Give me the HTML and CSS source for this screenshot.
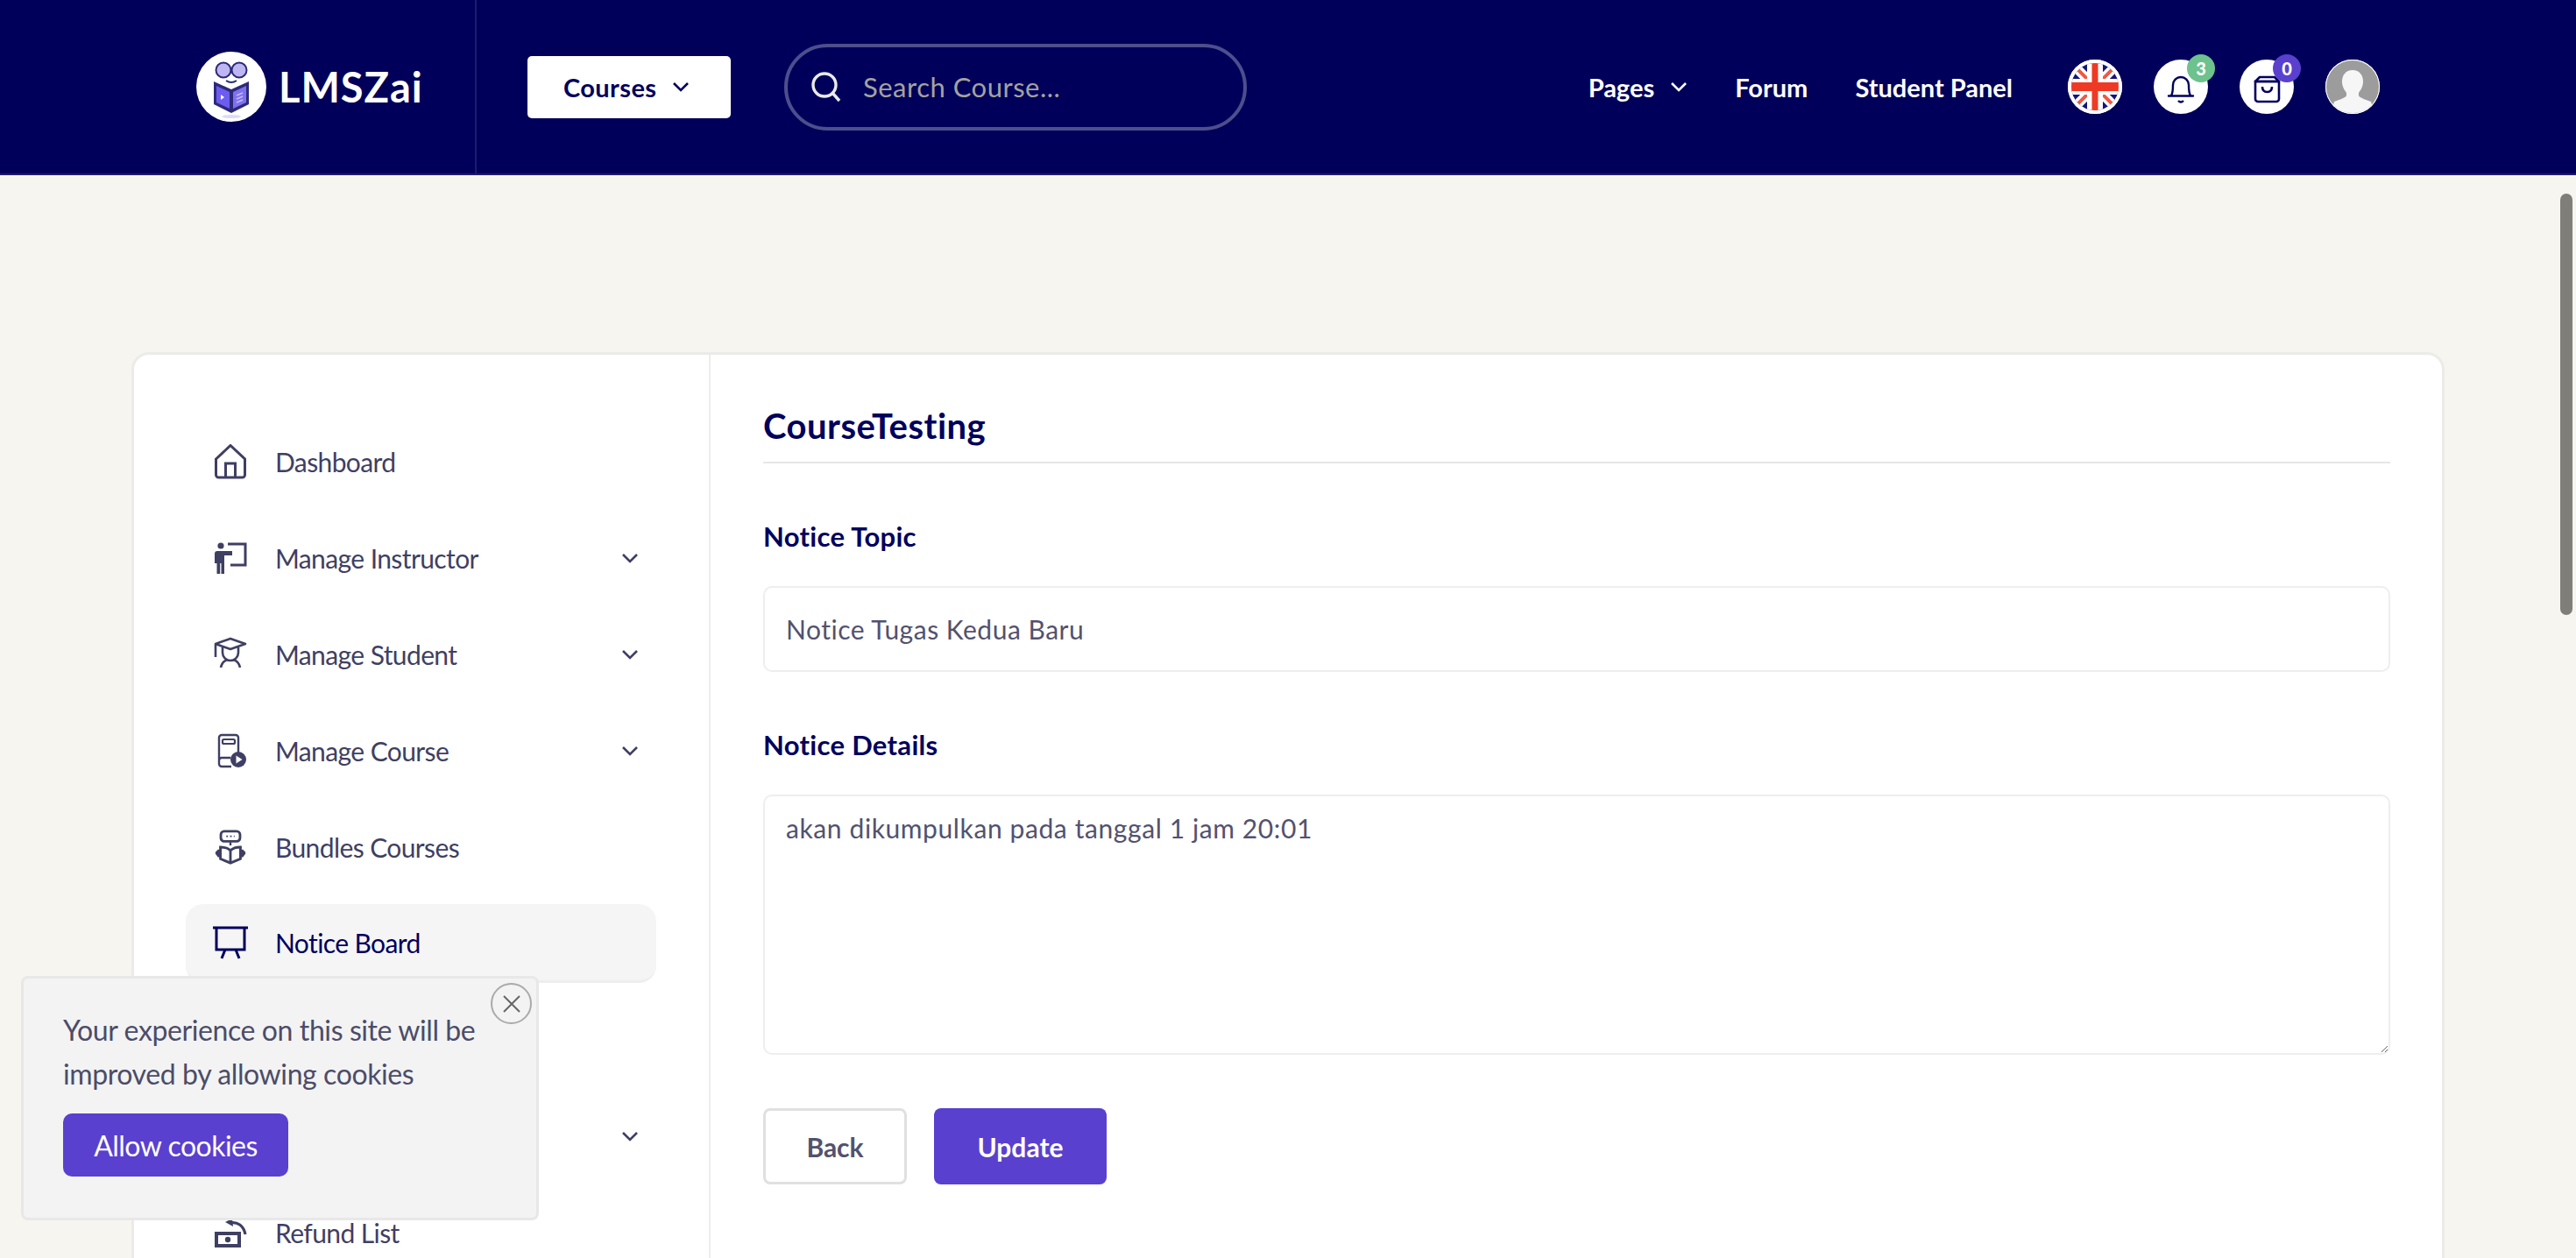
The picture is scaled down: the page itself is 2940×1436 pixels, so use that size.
FILE: index.html
```html
<!DOCTYPE html>
<html lang="en">
<head>
    <meta charset="UTF-8">
    <title>LMSZai - Notice Board</title>
    <link rel="stylesheet" href="styles.css">
</head>
<body>
    <header class="topbar">
        <a class="brand">
            <span class="brand-mark">
                <svg viewBox="0 0 80 80" width="80" height="80">
                    <circle cx="40" cy="40" r="40" fill="#fff"/>
                    <circle cx="31" cy="21" r="8.500" fill="#bdb6f2" stroke="#2c2a78" stroke-width="2"/>
                    <circle cx="49" cy="21" r="8.500" fill="#bdb6f2" stroke="#2c2a78" stroke-width="2"/>
                    <path d="M34 33q6 4 12 0" fill="none" stroke="#2c2a78" stroke-width="2"/>
                    <path d="M20 34l20 9 20-9v26L40 70 20 60z" fill="#2c2a78"/>
                    <path d="M23 39l15 7v19l-15-7z" fill="#6d5cf0"/>
                    <path d="M57 39l-15 7v19l15-7z" fill="#7f70f0"/>
                    <path d="M28 49l4 3-4 3z" fill="#fff"/>
                    <path d="M46 50l7-3M46 54l7-3M46 58l7-3" stroke="#c4bdf7" stroke-width="1.500"/>
                    <ellipse cx="40" cy="74" rx="11" ry="2" fill="#dedbf7"/>
                </svg>
            </span>
            <span class="brand-name">LMSZai</span>
        </a>
        <button class="courses-btn">Courses
            <svg class="chev" viewBox="0 0 20 12" width="20" height="12"><path d="M2 2l8 8 8-8"/></svg>
        </button>
        <div class="search">
            <svg viewBox="0 0 36 36" width="36" height="36"><circle cx="16" cy="16" r="13"/><path d="M25 25l8 9"/></svg>
            <span class="search-text">Search Course...</span>
        </div>
        <nav class="topnav">
            <a class="topnav-link">Pages
                <svg class="chev" viewBox="0 0 20 12" width="20" height="12"><path d="M2 2l8 8 8-8"/></svg>
            </a>
            <a class="topnav-link">Forum</a>
            <a class="topnav-link">Student Panel</a>
        </nav>
        <div class="top-icons">
            <span class="round-icon">
                <svg viewBox="0 0 62 62" width="62" height="62">
                    <defs><clipPath id="flagClip"><circle cx="31" cy="31" r="27"/></clipPath></defs>
                    <circle cx="31" cy="31" r="31" fill="#fff"/>
                    <g clip-path="url(#flagClip)">
                        <rect width="62" height="62" fill="#14147a"/>
                        <path d="M4 4l54 54M58 4L4 58" stroke="#fff" stroke-width="11"/>
                        <path d="M4 4l54 54M58 4L4 58" stroke="#ee5a44" stroke-width="4"/>
                        <path d="M31 0v62M0 31h62" stroke="#fff" stroke-width="18"/>
                        <path d="M31 0v62" stroke="#ee3a24" stroke-width="7"/>
                        <path d="M0 31h62" stroke="#ee3a24" stroke-width="10"/>
                    </g>
                </svg>
            </span>
            <span class="round-icon">
                <svg viewBox="0 0 62 62" width="62" height="62">
                    <path d="M20 41c2-3 2-6 2-12a9 9 0 0 1 18 0c0 6 0 9 2 12M17 41.500h28" fill="none" stroke="#01005c" stroke-width="2.400" stroke-linecap="round"/>
                    <path d="M28 47q3 3 6 0" fill="none" stroke="#01005c" stroke-width="2.400"/>
                </svg>
                <span class="badge badge-green">3</span>
            </span>
            <span class="round-icon">
                <svg viewBox="0 0 62 62" width="62" height="62">
                    <path d="M18 25h27v20a3 3 0 0 1-3 3H21a3 3 0 0 1-3-3z" fill="none" stroke="#01005c" stroke-width="2.600"/>
                    <path d="M23 20h17l5 5H18z" fill="none" stroke="#01005c" stroke-width="2.600" stroke-linejoin="round"/>
                    <path d="M26 31q0 6 5.500 6t5.500-6" fill="none" stroke="#01005c" stroke-width="2.600"/>
                </svg>
                <span class="badge badge-purple">0</span>
            </span>
            <span class="round-icon">
                <svg viewBox="0 0 62 62" width="62" height="62">
                    <defs><clipPath id="userClip"><circle cx="31" cy="31" r="30"/></clipPath></defs>
                    <circle cx="31" cy="31" r="31" fill="#fff"/>
                    <g clip-path="url(#userClip)">
                        <rect width="62" height="62" fill="#9c9c9c"/>
                        <path d="M31 12c8 0 12 6 12 13 0 6-3 10-5 13v3c0 2 8 5 14 7l4 14H6l4-14c6-2 14-5 14-7v-3c-2-3-5-7-5-13 0-7 4-13 12-13z" fill="#f6f6f6"/>
                    </g>
                </svg>
            </span>
        </div>
    </header>

    <main class="page">
        <div class="panel">
            <aside class="sidebar">
                <a class="side-item">
                    <svg class="side-icon" viewBox="0 0 40 40" stroke-width="3"><path d="M3.500 17L20 1.500 36.500 17v18a3 3 0 0 1-3 3h-27a3 3 0 0 1-3-3zM14.500 38V22h11v16"/></svg>
                    <span>Dashboard</span>
                </a>
                <a class="side-item">
                    <svg class="side-icon" viewBox="0 0 40 40">
                        <path d="M17 4h20v24H20" stroke-width="3"/>
                        <circle class="fill" cx="9" cy="6" r="3.600"/>
                        <path class="fill" d="M2 15a3 3 0 0 1 3-3h17v5h-9v21H9.500V26H8.200v12H4.500V26H2z"/>
                    </svg>
                    <span>Manage Instructor</span>
                    <svg class="chev side-chev" viewBox="0 0 20 12" width="20" height="12"><path d="M2 2l8 8 8-8"/></svg>
                </a>
                <a class="side-item">
                    <svg class="side-icon" viewBox="0 0 40 40" stroke-width="2.600">
                        <path d="M20 2l17 6-17 6-17-6zM3 8v15" stroke-linejoin="round"/>
                        <path d="M11 12v6a9 9 0 0 0 18 0v-6"/>
                        <path d="M9 35c1-5 4-8 8-9M31 35c-1-5-4-8-8-9"/>
                    </svg>
                    <span>Manage Student</span>
                    <svg class="chev side-chev" viewBox="0 0 20 12" width="20" height="12"><path d="M2 2l8 8 8-8"/></svg>
                </a>
                <a class="side-item">
                    <svg class="side-icon" viewBox="0 0 40 40">
                        <path d="M29 22V5a3 3 0 0 0-3-3H10a3 3 0 0 0-3 3v30a3 3 0 0 0 3 3h11M7 31a3 3 0 0 1 3-3h10" stroke-width="2.400"/>
                        <rect x="11" y="7" width="14" height="5" rx="1.500" stroke-width="2.200"/>
                        <circle class="fill" cx="29" cy="30" r="9"/>
                        <path d="M26.500 25.500l7 4.500-7 4.500z" fill="#fff" stroke="none"/>
                    </svg>
                    <span>Manage Course</span>
                    <svg class="chev side-chev" viewBox="0 0 20 12" width="20" height="12"><path d="M2 2l8 8 8-8"/></svg>
                </a>
                <a class="side-item">
                    <svg class="side-icon" viewBox="0 0 40 42">
                        <rect x="8.500" y="2" width="23" height="12" rx="4" stroke-width="3"/>
                        <path d="M15 8h10" stroke-width="2" stroke-dasharray="2 2.500"/>
                        <path d="M20 15v4" stroke-width="2.500"/>
                        <path d="M20 25c-3-3-7-4-12-4v14l12 5 12-5V21c-5 0-9 1-12 4zM20 25v14" stroke-width="3"/>
                        <path class="fill" d="M5 24h3v9H5l-3-4v-2z"/>
                        <path class="fill" d="M35 24h-3v9h3l3-4v-2z"/>
                    </svg>
                    <span>Bundles Courses</span>
                </a>
                <a class="side-item side-item-active">
                    <svg class="side-icon" viewBox="0 0 40 40" stroke-width="3">
                        <path d="M0 3h40M4 3v25h32V3M14 28l-4 10M26 28l4 10"/>
                    </svg>
                    <span>Notice Board</span>
                </a>
                <a class="side-item"></a>
                <a class="side-item">
                    <svg class="chev side-chev" viewBox="0 0 20 12" width="20" height="12"><path d="M2 2l8 8 8-8"/></svg>
                </a>
                <a class="side-item">
                    <svg class="side-icon" viewBox="0 0 40 40">
                        <rect x="4" y="21" width="26" height="14" stroke-width="4"/>
                        <circle class="fill" cx="17" cy="28" r="3.200"/>
                        <path d="M19 9c9-2 16 3 18 13" stroke-width="3.200"/>
                        <path class="fill" d="M14 8l8-4 1 9z"/>
                    </svg>
                    <span>Refund List</span>
                </a>
            </aside>

            <section class="content">
                <h1 class="content-title">CourseTesting</h1>
                <label class="field-label">Notice Topic</label>
                <input class="field-input" type="text" value="Notice Tugas Kedua Baru">
                <label class="field-label">Notice Details</label>
                <textarea class="field-input field-area">akan dikumpulkan pada tanggal 1 jam 20:01</textarea>
                <div class="form-actions">
                    <button class="btn btn-back">Back</button>
                    <button class="btn btn-update">Update</button>
                </div>
            </section>
        </div>
    </main>

    <div class="cookie-box">
        <button class="cookie-close">
            <svg viewBox="0 0 22 22" width="22" height="22"><path d="M2 2l18 18M20 2L2 20"/></svg>
        </button>
        <p class="cookie-text">Your experience on this site will be improved by allowing cookies</p>
        <button class="cookie-btn">Allow cookies</button>
    </div>

    <div class="scroll-thumb"></div>
</body>
</html>
```
FILE: styles.css
```css
* {
    box-sizing: border-box;
}

html, body {
    height: 100%;
}

body {
    margin: 0;
    background: #f6f5f0;
    font-family: 'Lato', sans-serif;
    color: #3f3f63;
    overflow: hidden;
}

button {
    font-family: inherit;
    cursor: pointer;
}

.chev path {
    fill: none;
    stroke: currentColor;
    stroke-width: 2.6;
}

/* Top bar */
.topbar {
    height: 200px;
    padding-right: 224px;
    background: #00005a;
    border-bottom: 2px solid #1e1b70;
    display: flex;
    align-items: center;
    color: #fff;
}

.brand {
    width: 544px;
    height: 198px;
    padding-left: 224px;
    border-right: 2px solid #1c1b6c;
    display: flex;
    align-items: center;
    gap: 14px;
}

.brand-mark {
    display: flex;
}

.brand-name {
    font-size: 47px;
    font-weight: 700;
    letter-spacing: 1px;
}

.courses-btn {
    width: 232px;
    height: 71px;
    margin-left: 58px;
    padding-left: 41px;
    background: #fff;
    border: none;
    border-radius: 5px;
    color: #01005c;
    font-size: 29px;
    font-weight: 700;
    letter-spacing: 0.4px;
    display: flex;
    align-items: center;
    gap: 18px;
}

.search {
    width: 528px;
    height: 99px;
    margin-left: 61px;
    border: 4px solid #4d4e8d;
    border-radius: 50px;
    padding-left: 26px;
    display: flex;
    align-items: center;
    gap: 24px;
}

.search svg {
    fill: none;
    stroke: #eaeaea;
    stroke-width: 3.4;
}

.search-text {
    color: #a3a3a0;
    font-size: 31px;
    letter-spacing: 0.5px;
}

.topnav {
    margin-left: auto;
    display: flex;
    align-items: center;
    gap: 54px;
}

.topnav-link {
    font-size: 29px;
    font-weight: 700;
    display: flex;
    align-items: center;
    gap: 18px;
}

.top-icons {
    margin-left: 63px;
    display: flex;
    gap: 36px;
}

.round-icon {
    position: relative;
    width: 62px;
    height: 62px;
    background: #fff;
    border-radius: 50%;
    display: flex;
}

.badge {
    position: absolute;
    top: -6px;
    right: -8px;
    width: 32px;
    height: 32px;
    border-radius: 50%;
    color: #fff;
    font-size: 20px;
    font-weight: 900;
    display: flex;
    align-items: center;
    justify-content: center;
}

.badge-green {
    background: #6dc28d;
}

.badge-purple {
    background: #5a40ce;
}

/* Panel */
.page {
    padding: 202px 150px 0;
}

.panel {
    width: 2640px;
    background: #fff;
    border: 3px solid #ebebe8;
    border-radius: 20px;
    display: flex;
}

.sidebar {
    width: 658px;
    padding: 77px 60px 0 59px;
    border-right: 2px solid #ededeb;
    display: flex;
    flex-direction: column;
    gap: 20px;
    flex-shrink: 0;
}

.side-item {
    height: 90px;
    padding: 0 20px 0 31px;
    border-radius: 20px;
    font-size: 30px;
    letter-spacing: -0.6px;
    display: flex;
    align-items: center;
    gap: 31px;
}

.side-icon {
    width: 40px;
    height: 40px;
    flex-shrink: 0;
    fill: none;
    stroke: currentColor;
}

.side-icon .fill {
    fill: currentColor;
    stroke: none;
}

.side-chev {
    margin-left: auto;
}

.side-item-active {
    background: #f5f5f5;
    border-bottom: 3px solid #eeeeee;
    color: #01005c;
}

/* Form */
.content {
    flex: 1;
    padding: 56px 59px 100px 60px;
    display: flex;
    flex-direction: column;
    align-items: flex-start;
}

.content-title {
    width: 100%;
    margin: 0 0 63px;
    padding-bottom: 16px;
    border-bottom: 2px solid #e6e6e6;
    color: #01005c;
    font-size: 40px;
    line-height: 50px;
    font-weight: 700;
    letter-spacing: 0.5px;
}

.field-label {
    height: 40px;
    margin-bottom: 37px;
    color: #01005c;
    font-size: 31px;
    line-height: 40px;
    font-weight: 700;
    letter-spacing: 0.3px;
}

.field-input {
    width: 100%;
    height: 98px;
    margin-bottom: 63px;
    padding: 0 24px;
    background: #fff;
    border: 2px solid #eeeeee;
    border-radius: 10px;
    color: #52526f;
    font-family: inherit;
    font-size: 30px;
    letter-spacing: 0.5px;
    outline: none;
}

.field-area {
    height: 297px;
    margin-bottom: 61px;
    padding-top: 17px;
    line-height: 38px;
    letter-spacing: 0.6px;
}

.form-actions {
    display: flex;
    gap: 31px;
}

.btn {
    height: 87px;
    border-radius: 8px;
    font-size: 30px;
    font-weight: 700;
}

.btn-back {
    width: 164px;
    background: #fff;
    border: 3px solid #e0e0e0;
    color: #52526f;
}

.btn-update {
    width: 197px;
    background: #5a40ce;
    border: none;
    color: #fff;
}

/* Cookie notice */
.cookie-box {
    position: fixed;
    left: 24px;
    top: 1114px;
    width: 591px;
    height: 279px;
    padding: 34px 45px 0;
    background: #f3f3f3;
    border: 3px solid #e8e8e8;
    border-radius: 8px;
}

.cookie-close {
    position: absolute;
    top: 5px;
    right: 5px;
    width: 47px;
    height: 47px;
    padding: 0;
    background: none;
    border: 2px solid #aaaaaa;
    border-radius: 50%;
    display: flex;
    align-items: center;
    justify-content: center;
}

.cookie-close path {
    fill: none;
    stroke: #666666;
    stroke-width: 2;
}

.cookie-text {
    margin: 0 0 20px;
    color: #4c4c68;
    font-size: 32px;
    line-height: 50px;
    letter-spacing: -0.4px;
}

.cookie-btn {
    width: 257px;
    height: 72px;
    background: #5a40ce;
    border: none;
    border-radius: 10px;
    color: #fff;
    font-size: 32px;
    letter-spacing: -0.5px;
}

.scroll-thumb {
    position: fixed;
    top: 221px;
    right: 4px;
    width: 14px;
    height: 481px;
    background: #7f7e78;
    border-radius: 7px;
}
```
